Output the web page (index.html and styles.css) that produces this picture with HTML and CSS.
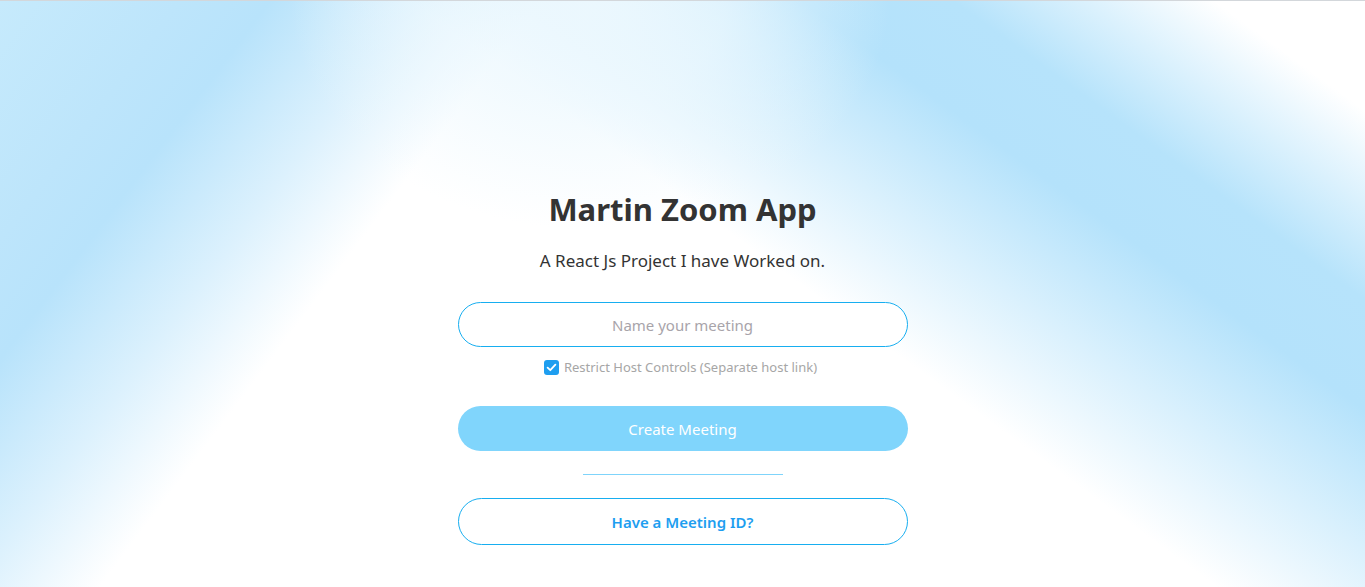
FILE: index.html
```html
<!DOCTYPE html>
<html lang="en">
<head>
<meta charset="utf-8">
<title>Martin Zoom App</title>
<link rel="stylesheet" href="styles.css">
</head>
<body>
<main class="page">
  <section class="card">
    <h1 class="title">Martin Zoom App</h1>
    <p class="subtitle">A React Js Project I have Worked on.</p>
    <input class="name-input" type="text" placeholder="Name your meeting">
    <label class="restrict">
      <input type="checkbox" class="restrict-native" checked>
      <span class="restrict-box" aria-hidden="true">
        <svg width="15" height="15" viewBox="0 0 15 15"><path d="M3.6 7.6 L6.3 10.2 L11.4 4.6" fill="none" stroke="#ffffff" stroke-width="1.8" stroke-linecap="round" stroke-linejoin="round"/></svg>
      </span>
      <span>Restrict Host Controls (Separate host link)</span>
    </label>
    <button class="btn-create" type="button">Create Meeting</button>
    <hr class="divider">
    <button class="btn-join" type="button">Have a Meeting ID?</button>
  </section>
</main>
</body>
</html>
```
FILE: styles.css
```css
* { box-sizing: border-box; }
html, body { margin: 0; height: 100%; }
body {
  font-family: "Noto Sans", "Open Sans", sans-serif;
  border-top: 1px solid #d3d7db;
  background:
    radial-gradient(ellipse 300px 230px at 590px 0px, rgba(236,248,254,0.95) 0%, rgba(236,248,254,0.7) 45%, rgba(236,248,254,0) 100%),
    linear-gradient(36deg, rgba(180,226,251,0) 56%, rgba(180,226,251,0.55) 66%, #b4e2fb 74%, #b6e3fb 81%, #ffffff 93%),
    linear-gradient(127deg, #c6eafc 0%, #bde5fb 10%, #b8e3fb 15%, #dcf1fd 23%, #ffffff 30%, #ffffff 100%);
  overflow: hidden;
}
.page {
  height: 586px;
  display: flex;
  justify-content: center;
}
.card {
  width: 450px;
  display: flex;
  flex-direction: column;
  align-items: center;
  padding-top: 186px;
}
.title {
  margin: 0;
  font-size: 31px;
  font-weight: 700;
  color: #333333;
  line-height: 44px;
}
.subtitle {
  margin: 17px 0 0;
  font-size: 17px;
  color: #333333;
  line-height: 26px;
}
.name-input {
  margin-top: 28px;
  width: 450px;
  height: 45px;
  border: 1px solid #17aef0;
  border-radius: 23px;
  background: #ffffff;
  font-family: inherit;
  font-size: 15px;
  text-align: center;
  color: #333;
  outline: none;
}
.name-input::placeholder { color: #a8a4aa; }
.restrict {
  margin-top: 10px;
  margin-right: 4px;
  display: flex;
  align-items: center;
  gap: 5px;
  font-size: 13px;
  color: #a6a6a6;
  line-height: 20px;
}
.restrict-native {
  position: absolute;
  opacity: 0;
  width: 0;
  height: 0;
  margin: 0;
}
.restrict-box {
  width: 15px;
  height: 15px;
  border-radius: 3px;
  background: #1e9ef0;
  display: flex;
}
.btn-create {
  margin-top: 29px;
  width: 450px;
  height: 45px;
  border: none;
  border-radius: 23px;
  background: #80d5fc;
  color: #ffffff;
  font-family: inherit;
  font-size: 15px;
}
.divider {
  margin: 23px 0 0;
  width: 200px;
  height: 0;
  border: 0;
  border-top: 1px solid #7fd4fb;
}
.btn-join {
  margin-top: 23px;
  width: 450px;
  height: 47px;
  border: 1px solid #17aef0;
  border-radius: 24px;
  background: #ffffff;
  color: #1e9ef0;
  font-family: inherit;
  font-size: 15px;
  font-weight: 600;
}
```
